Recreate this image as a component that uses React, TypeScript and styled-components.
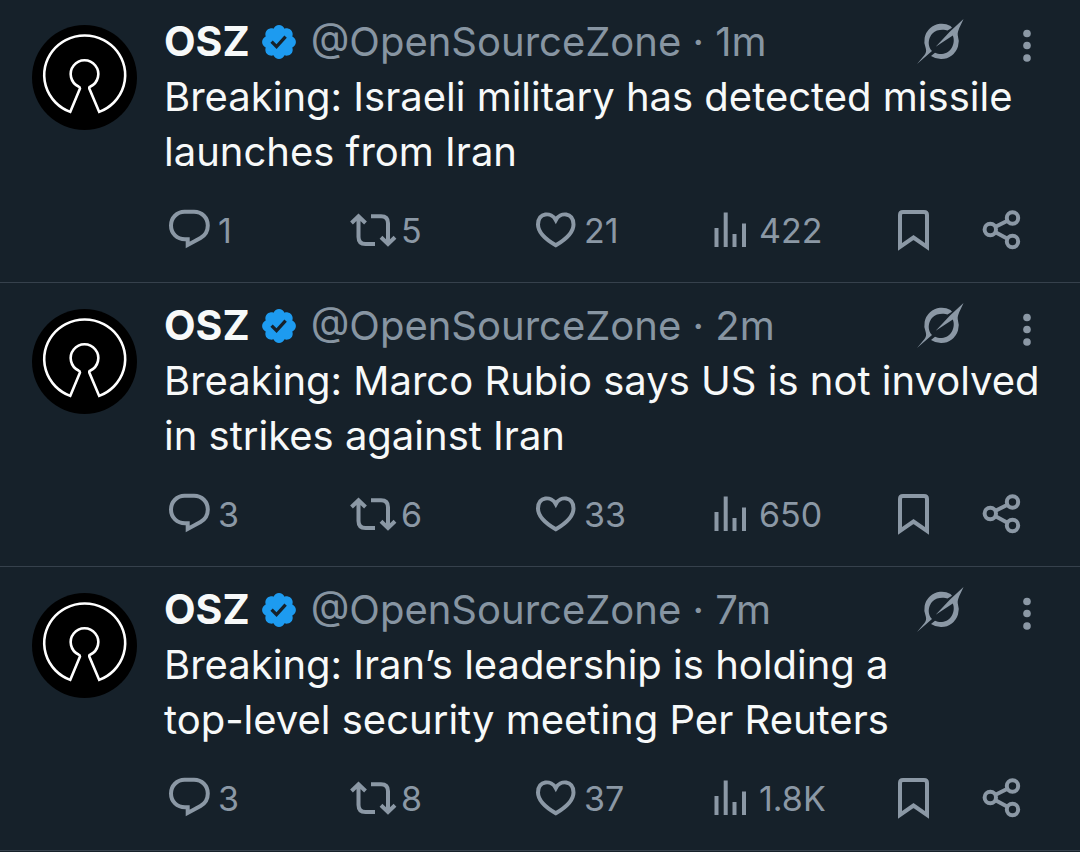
import React from "react";
import styled, { createGlobalStyle } from "styled-components";

const GlobalStyle = createGlobalStyle`
  * { box-sizing: border-box; }
  body {
    margin: 0;
    background: #16212a;
    color: #f7f9f9;
    font-family: Inter, "Liberation Sans", sans-serif;
  }
`;

const Feed = styled.main`
  width: 100%;
  overflow: hidden;
`;

const Tweet = styled.article`
  display: flex;
  gap: 27px;
  padding: 15px 32px 33px;
  border-bottom: 1px solid #36414c;
  &:first-child { padding-top: 14px; }
`;

const Avatar = styled.svg`
  flex: none;
  width: 105px;
  height: 105px;
  margin-top: 11px;
`;

const Content = styled.div`
  flex: 1;
  min-width: 0;
`;

const Header = styled.header`
  display: flex;
  align-items: center;
  height: 55px;
  font-size: 40px;
  line-height: 55px;
  white-space: nowrap;
`;

const Name = styled.span`
  font-size: 41px;
  font-weight: 700;
`;

const Badge = styled.svg`
  flex: none;
  width: 36px;
  height: 36px;
  margin: 0 14px 0 11px;
`;

const Meta = styled.span`
  flex: 1;
  color: #8795a2;
`;

const IconButton = styled.button`
  display: flex;
  align-items: center;
  padding: 0;
  border: 0;
  background: none;
  color: #8b98a5;
  font: inherit;
  cursor: pointer;
`;

const HeaderButtons = styled.div`
  display: flex;
  gap: 59px;
  padding-right: 17px;
`;

const Body = styled.p`
  margin: 0 -8px 0 0;
  font-size: 40px;
  line-height: 55px;
  white-space: pre-line;
`;

const Actions = styled.footer`
  display: grid;
  grid-template-columns: 181fr 186fr 178fr 183fr 86fr 65fr;
  height: 42px;
  margin-top: 28px;
  padding-left: 5px;
  font-size: 34px;
  line-height: 42px;
`;

const Count = styled.span<{ $gap: number }>`
  margin-left: ${(p) => p.$gap}px;
  padding-top: 3px;
`;

const Icon = styled.svg`
  flex: none;
  display: block;
  overflow: visible;
  fill: none;
  stroke: currentColor;
  stroke-width: 4;
`;

const Logo = () => (
  <Avatar viewBox="0 0 105 105" role="img" aria-label="OSZ">
    <circle cx="52.5" cy="52.5" r="52.5" fill="#000" />
    <path
      d="M38.200 86.900 L48 63.500 Q48 62 46.500 61.500 A13.800 13.800 0 1 1 58.500 61.500 Q57 62 57.300 63.500 L67.200 86.900 A40.500 39.500 0 1 0 38.200 86.900 Z"
      fill="none"
      stroke="#fff"
      strokeWidth="2.6"
    />
  </Avatar>
);

const Verified = () => (
  <Badge viewBox="1 1 20 20" role="img" aria-label="Verified">
    <path
      fill="#1d9bf0"
      d="M20.396 11c-.018-.646-.215-1.275-.57-1.816-.354-.54-.852-.972-1.438-1.246.223-.607.27-1.264.14-1.897-.131-.634-.437-1.218-.882-1.687-.47-.445-1.053-.75-1.687-.882-.633-.13-1.29-.083-1.897.14-.273-.587-.704-1.086-1.245-1.44S11.647 1.620 11 1.604c-.646.017-1.273.213-1.813.568s-.969.854-1.240 1.440c-.608-.223-1.267-.272-1.902-.140-.635.130-1.220.436-1.690.882-.445.470-.749 1.055-.878 1.688-.130.633-.080 1.290.144 1.896-.587.274-1.087.705-1.443 1.245-.356.540-.555 1.170-.574 1.817.020.647.218 1.276.574 1.817.356.540.856.972 1.443 1.245-.224.606-.274 1.263-.144 1.896.130.634.433 1.218.877 1.688.470.443 1.054.747 1.687.878.633.132 1.290.084 1.897-.136.274.586.705 1.084 1.246 1.439.540.354 1.170.551 1.816.569.647-.016 1.276-.213 1.817-.567s.972-.854 1.245-1.440c.604.239 1.266.296 1.903.164.636-.132 1.220-.447 1.680-.907.460-.460.776-1.044.908-1.681s.075-1.299-.165-1.903c.586-.274 1.084-.705 1.439-1.246.354-.540.551-1.170.569-1.816z"
    />
    <path fill="#16212a" d="M9.662 14.850l-3.429-3.428 1.293-1.302 2.072 2.072 4.400-4.794 1.347 1.246z" />
  </Badge>
);

const Grok = () => (
  <Icon width="47" height="46" viewBox="0 0 47 46" aria-hidden="true">
    <g fill="currentColor" stroke="none">
      <path d="M30.500 11.600 L35 8.800 L33.500 7 A17.600 17.600 0 0 0 8.800 29.500 C9.500 32 9 34 7.500 36 L0 45 L15 32 C9 26 12 14.500 20 11.600 C24 10.200 28 10.500 30.500 11.600 Z" />
      <path d="M14 37 A17.800 17.800 0 0 0 40.800 16.500 C40 12 44 6 46.500 0 L33 12.500 L18.700 27.700 L35.800 16.500 C39 24 34 34.500 25 35 C22 35.100 20 34.500 18 33.700 Z" />
    </g>
  </Icon>
);

const Dots = () => (
  <Icon width="8" height="42" viewBox="0 0 8 42" aria-hidden="true">
    <g fill="currentColor" stroke="none">
      <circle cx="4" cy="12.500" r="3.800" />
      <circle cx="4" cy="24.500" r="3.800" />
      <circle cx="4" cy="37" r="3.800" />
    </g>
  </Icon>
);

const Reply = () => (
  <Icon width="41" height="40" viewBox="0 0 41 40" aria-hidden="true">
    <path d="M15.500 1.800 H25 C33 1.800 38.800 7.800 38.800 15.500 C38.800 21 36 25.500 31.500 28 L18.700 35 V29.300 H16 C8 29.300 2 23.500 2 15.500 C2 7.800 8 1.800 15.500 1.800 Z" />
  </Icon>
);

const Repost = () => (
  <Icon width="46" height="40" viewBox="0 0 46 40" aria-hidden="true">
    <path d="M1.500 13 L8.500 6.300 L15.500 13 M8.500 7 V27 Q8.500 34 15.500 34 H25" />
    <path d="M21 6.300 H31 Q38 6.300 38 13.300 V33 M31 27.300 L38 34 L45 27.300" />
  </Icon>
);

const Heart = () => (
  <Icon width="40" height="40" viewBox="0 0 40 40" aria-hidden="true">
    <path d="M19.800 10 C15.500 1.800 2 2 2 14.500 C2 22.500 9 29 19.800 35.300 C30.500 29 37.500 22.500 37.500 14.500 C37.500 2 24 1.800 19.800 10 Z" />
  </Icon>
);

const Views = () => (
  <Icon width="34" height="40" viewBox="0 0 34 40" aria-hidden="true">
    <path d="M2.500 18 V37 M11.700 2.500 V37 M20.500 24 V37 M30 13.500 V37" />
  </Icon>
);

const Bookmark = () => (
  <Icon width="33" height="42" viewBox="0 0 33 42" aria-hidden="true">
    <path d="M3 38 V6 Q3 3 6 3 H27 Q30 3 30 6 V38 L16.500 28.500 Z" />
  </Icon>
);

const Share = () => (
  <Icon width="38" height="42" viewBox="0 0 38 42" aria-hidden="true">
    <circle cx="7.300" cy="20.500" r="5.700" />
    <circle cx="29.500" cy="9" r="5.700" />
    <circle cx="29.500" cy="32.500" r="5.700" />
    <path d="M12.500 17.800 L24.500 11.700 M12.500 23.300 L24.500 29.700" />
  </Icon>
);

interface TweetData {
  age: string;
  text: string;
  replies: string;
  reposts: string;
  likes: string;
  views: string;
}

const tweets: TweetData[] = [
  { age: "1m", text: "Breaking: Israeli military has detected missile\nlaunches from Iran", replies: "1", reposts: "5", likes: "21", views: "422" },
  { age: "2m", text: "Breaking: Marco Rubio says US is not involved\nin strikes against Iran", replies: "3", reposts: "6", likes: "33", views: "650" },
  { age: "7m", text: "Breaking: Iran’s leadership is holding a\ntop-level security meeting Per Reuters", replies: "3", reposts: "8", likes: "37", views: "1.8K" },
];

export default function App() {
  return (
    <>
      <GlobalStyle />
      <Feed>
        {tweets.map((t) => (
          <Tweet key={t.age}>
            <Logo />
            <Content>
              <Header>
                <Name>OSZ</Name>
                <Verified />
                <Meta>@OpenSourceZone · {t.age}</Meta>
                <HeaderButtons>
                  <IconButton aria-label="Grok"><Grok /></IconButton>
                  <IconButton aria-label="More"><Dots /></IconButton>
                </HeaderButtons>
              </Header>
              <Body>{t.text}</Body>
              <Actions>
                <IconButton aria-label="Reply"><Reply /><Count $gap={8}>{t.replies}</Count></IconButton>
                <IconButton aria-label="Repost"><Repost /><Count $gap={5}>{t.reposts}</Count></IconButton>
                <IconButton aria-label="Like"><Heart /><Count $gap={8}>{t.likes}</Count></IconButton>
                <IconButton aria-label="Views"><Views /><Count $gap={11}>{t.views}</Count></IconButton>
                <IconButton aria-label="Bookmark"><Bookmark /></IconButton>
                <IconButton aria-label="Share"><Share /></IconButton>
              </Actions>
            </Content>
          </Tweet>
        ))}
      </Feed>
    </>
  );
}
